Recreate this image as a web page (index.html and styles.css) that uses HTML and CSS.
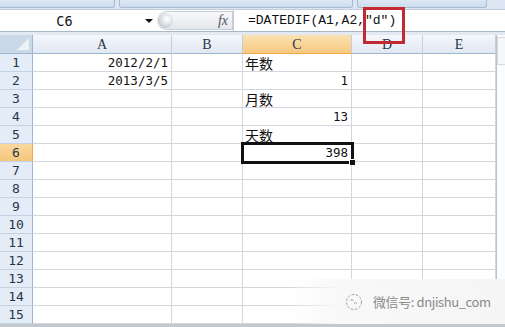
FILE: index.html
```html
<!DOCTYPE html>
<html>
<head>
    <meta charset="UTF-8">
    <title>DATEDIF</title>
    <link rel="stylesheet" href="styles.css">
</head>
<body>
	<div class="ribbon">
		<span class="rbtn b1"></span>
		<span class="rbtn b2"></span>
		<span class="rbtn b3"></span>
	</div>
	<div class="fbar">
		<div class="namebox">
			<span class="ref">C6</span>
			<span class="arrow"></span>
		</div>
		<div class="fxbox">
			<span class="knob"></span>
			<span class="fx">fx</span>
		</div>
		<div class="formula">=DATEDIF(A1,A2,″d″)</div>
	</div>
	<div class="gap"></div>
	<div class="body">
		<div class="sheet">
			<div class="corner"><svg width="14" height="14" viewBox="0 0 14 14"><polygon points="13,1 13,13 1,13" fill="#eef3f9"/></svg></div>
			<div class="ch">A</div><div class="ch">B</div><div class="ch sel">C</div><div class="ch">D</div><div class="ch">E</div>

			<div class="rh">1</div><div class="c num">2012/2/1</div><div class="c"></div><div class="c zh">年数</div><div class="c"></div><div class="c"></div>
			<div class="rh">2</div><div class="c num">2013/3/5</div><div class="c"></div><div class="c num">1</div><div class="c"></div><div class="c"></div>
			<div class="rh">3</div><div class="c"></div><div class="c"></div><div class="c zh">月数</div><div class="c"></div><div class="c"></div>
			<div class="rh">4</div><div class="c"></div><div class="c"></div><div class="c num">13</div><div class="c"></div><div class="c"></div>
			<div class="rh">5</div><div class="c"></div><div class="c"></div><div class="c zh">天数</div><div class="c"></div><div class="c"></div>
			<div class="rh sel">6</div><div class="c"></div><div class="c"></div><div class="c num active">398</div><div class="c"></div><div class="c"></div>
			<div class="rh">7</div><div class="c"></div><div class="c"></div><div class="c"></div><div class="c"></div><div class="c"></div>
			<div class="rh">8</div><div class="c"></div><div class="c"></div><div class="c"></div><div class="c"></div><div class="c"></div>
			<div class="rh">9</div><div class="c"></div><div class="c"></div><div class="c"></div><div class="c"></div><div class="c"></div>
			<div class="rh">10</div><div class="c"></div><div class="c"></div><div class="c"></div><div class="c"></div><div class="c"></div>
			<div class="rh">11</div><div class="c"></div><div class="c"></div><div class="c"></div><div class="c"></div><div class="c"></div>
			<div class="rh">12</div><div class="c"></div><div class="c"></div><div class="c"></div><div class="c"></div><div class="c"></div>
			<div class="rh">13</div><div class="c"></div><div class="c"></div><div class="c"></div><div class="c"></div><div class="c"></div>
			<div class="rh">14</div><div class="c"></div><div class="c"></div><div class="c"></div><div class="c"></div><div class="c"></div>
			<div class="rh">15</div><div class="c"></div><div class="c"></div><div class="c"></div><div class="c"></div><div class="c"></div>
		</div>
		<div class="vscroll"><span class="vbtn"></span></div>
	</div>
	<div class="hscroll"></div>

	<!-- red highlight around the "d" argument -->
	<div class="mark"></div>

	<div class="watermark">
		<svg class="wx" width="18" height="18" viewBox="0 0 18 18">
			<circle cx="9" cy="9" r="7.5" fill="none" stroke="#a0a0a0" stroke-width="1" stroke-dasharray="2.5 1.6"/>
			<path d="M5.5 7.5 q1.5 -2 3 0" fill="none" stroke="#a0a0a0" stroke-width="1"/>
			<path d="M9 10.5 q1.5 -2 3 0" fill="none" stroke="#a0a0a0" stroke-width="1"/>
		</svg>
		<span class="wtext">微信号: dnjishu_com</span>
	</div>
</body>
</html>
```

FILE: styles.css
```css
body{
	margin: 0;
	width: 505px;
	height: 327px;
	overflow: hidden;
	background: #fff;
	position: relative;
	font-family: "DejaVu Sans Mono", "Noto Sans CJK SC", monospace;
}

/* ribbon remains */
.ribbon{
	height: 9px;
	background: #dce6f2;
	border-bottom: 1px solid #c4cfdd;
	display: flex;
	gap: 4px;
}
.rbtn{
	display: block;
	height: 7px;
	background: linear-gradient(#dde8f5, #cfdcee);
	border: 1px solid #a9bcd5;
	border-top: none;
	border-radius: 0 0 3px 3px;
}
.b1{ width: 114px; margin-left: -1px; }
.b2{ width: 232px; }
.b3{ width: 128px; }

/* formula bar */
.fbar{
	height: 21px;
	display: flex;
	background: #fff;
	border-bottom: 1px solid #a8b6c6;
}
.namebox{
	width: 157px;
	display: flex;
	align-items: center;
}
.ref{
	flex: 1;
	text-align: center;
	font-family: "DejaVu Sans Mono", monospace;
	font-size: 13.5px;
	color: #111;
	padding-right: 16px;
}
.arrow{
	width: 0; height: 0;
	border-left: 4px solid transparent;
	border-right: 4px solid transparent;
	border-top: 4px solid #111;
	margin-right: 4px;
	margin-top: 1px;
}
.fxbox{
	width: 76px;
	display: flex;
	align-items: center;
	justify-content: space-between;
	background: linear-gradient(#f7f8fa, #e3e7ec);
	border: 1px solid #c5ccd6;
	border-left: none;
	border-radius: 10px 0 0 10px;
	box-sizing: border-box;
	height: 19px;
	margin-top: 1px;
}
.knob{
	width: 15px; height: 15px;
	border-radius: 50%;
	background: radial-gradient(circle at 60% 40%, #fff 0, #e6e9ee 35%, #a9b1bb 100%);
	margin-left: 1px;
}
.fx{
	font-family: "Liberation Serif", serif;
	font-style: italic;
	font-size: 14px;
	color: #555;
	margin-right: 4px;
}
.formula{
	flex: 1;
	border-left: 1px solid #c5ccd6;
	padding-left: 14px;
	font-family: "Liberation Mono", monospace;
	font-size: 13px;
	line-height: 21px;
	color: #111;
}
.gap{
	height: 3px;
	background: #e3e9f1;
}

/* grid */
.body{
	display: flex;
}
.sheet{
	display: grid;
	grid-template-columns: 33px 139px 71px 109px 71px 73px;
	grid-template-rows: 19px repeat(15, 18px);
	width: 496px;
}
.corner{
	background: #cbd8e8;
	border-right: 1px solid #9eb6ce;
	border-bottom: 1px solid #9eb6ce;
	box-sizing: border-box;
	display: flex;
	align-items: flex-end;
	justify-content: flex-end;
	padding: 0 2px 2px 0;
}
.corner svg{ display: block; }
.ch{
	background: linear-gradient(#f4f7fb, #e1e8f2);
	border-right: 1px solid #c3cfdf;
	border-bottom: 1px solid #9eb6ce;
	box-sizing: border-box;
	text-align: center;
	font-family: "Liberation Serif", serif;
	font-size: 14px;
	line-height: 19px;
	color: #27354a;
}
.ch.sel{
	background: linear-gradient(#fbe2b3, #f6c87f);
	border-bottom-color: #f2a94a;
}
.rh{
	background: #e4ecf7;
	border-right: 1px solid #9eb6ce;
	border-bottom: 1px solid #c5d2e3;
	box-sizing: border-box;
	text-align: center;
	font-size: 13px;
	line-height: 18px;
	color: #2a3648;
}
.rh.sel{
	background: linear-gradient(#f9d89d, #f5c67c);
	border-right-color: #f2a94a;
}
.c{
	border-right: 1px solid #d4d8de;
	border-bottom: 1px solid #d4d8de;
	box-sizing: border-box;
	font-size: 12.5px;
	line-height: 18px;
	color: #111;
	padding: 0 3px;
	white-space: nowrap;
}
.c.num{ text-align: right; }
.c.zh{
	font-family: "Noto Sans CJK SC", sans-serif;
	font-size: 14px;
	line-height: 18px;
	padding-left: 2px;
}
.c.active{
	position: relative;
	outline: 3px solid #111;
	outline-offset: -1px;
	z-index: 1;
}
.c.active::after{
	content: "";
	position: absolute;
	right: -4px;
	bottom: -4px;
	width: 5px;
	height: 5px;
	background: #111;
	border: 1px solid #fff;
	border-width: 1px 0 0 1px;
}
.vscroll{
	flex: 1;
	border-left: 1px solid #b9c2cd;
	background: #fbfcfd;
	padding-top: 2px;
}
.vbtn{
	display: block;
	height: 26px;
	border: 1px solid #d6dbe2;
	border-right: none;
	background: #f6f7f9;
}
.hscroll{
	height: 3px;
	background: #c3c8cf;
}

.mark{
	position: absolute;
	left: 363px;
	top: 7px;
	width: 42px;
	height: 37px;
	border: 3px solid #c22a33;
	box-sizing: border-box;
	z-index: 3;
}

.watermark{
	position: absolute;
	left: 290px;
	top: 279px;
	right: 0;
	bottom: 3px;
	background: linear-gradient(to right, rgba(250,250,250,0), rgba(248,248,248,0.95) 22%, rgba(245,245,245,0.96));
	display: flex;
	align-items: center;
	padding-left: 55px;
	gap: 10px;
	z-index: 2;
}
.watermark .wx{ display: block; }
.wtext{
	font-family: "Noto Sans CJK SC", sans-serif;
	font-size: 13px;
	color: #8a8a8a;
	letter-spacing: -0.4px;
}
```
